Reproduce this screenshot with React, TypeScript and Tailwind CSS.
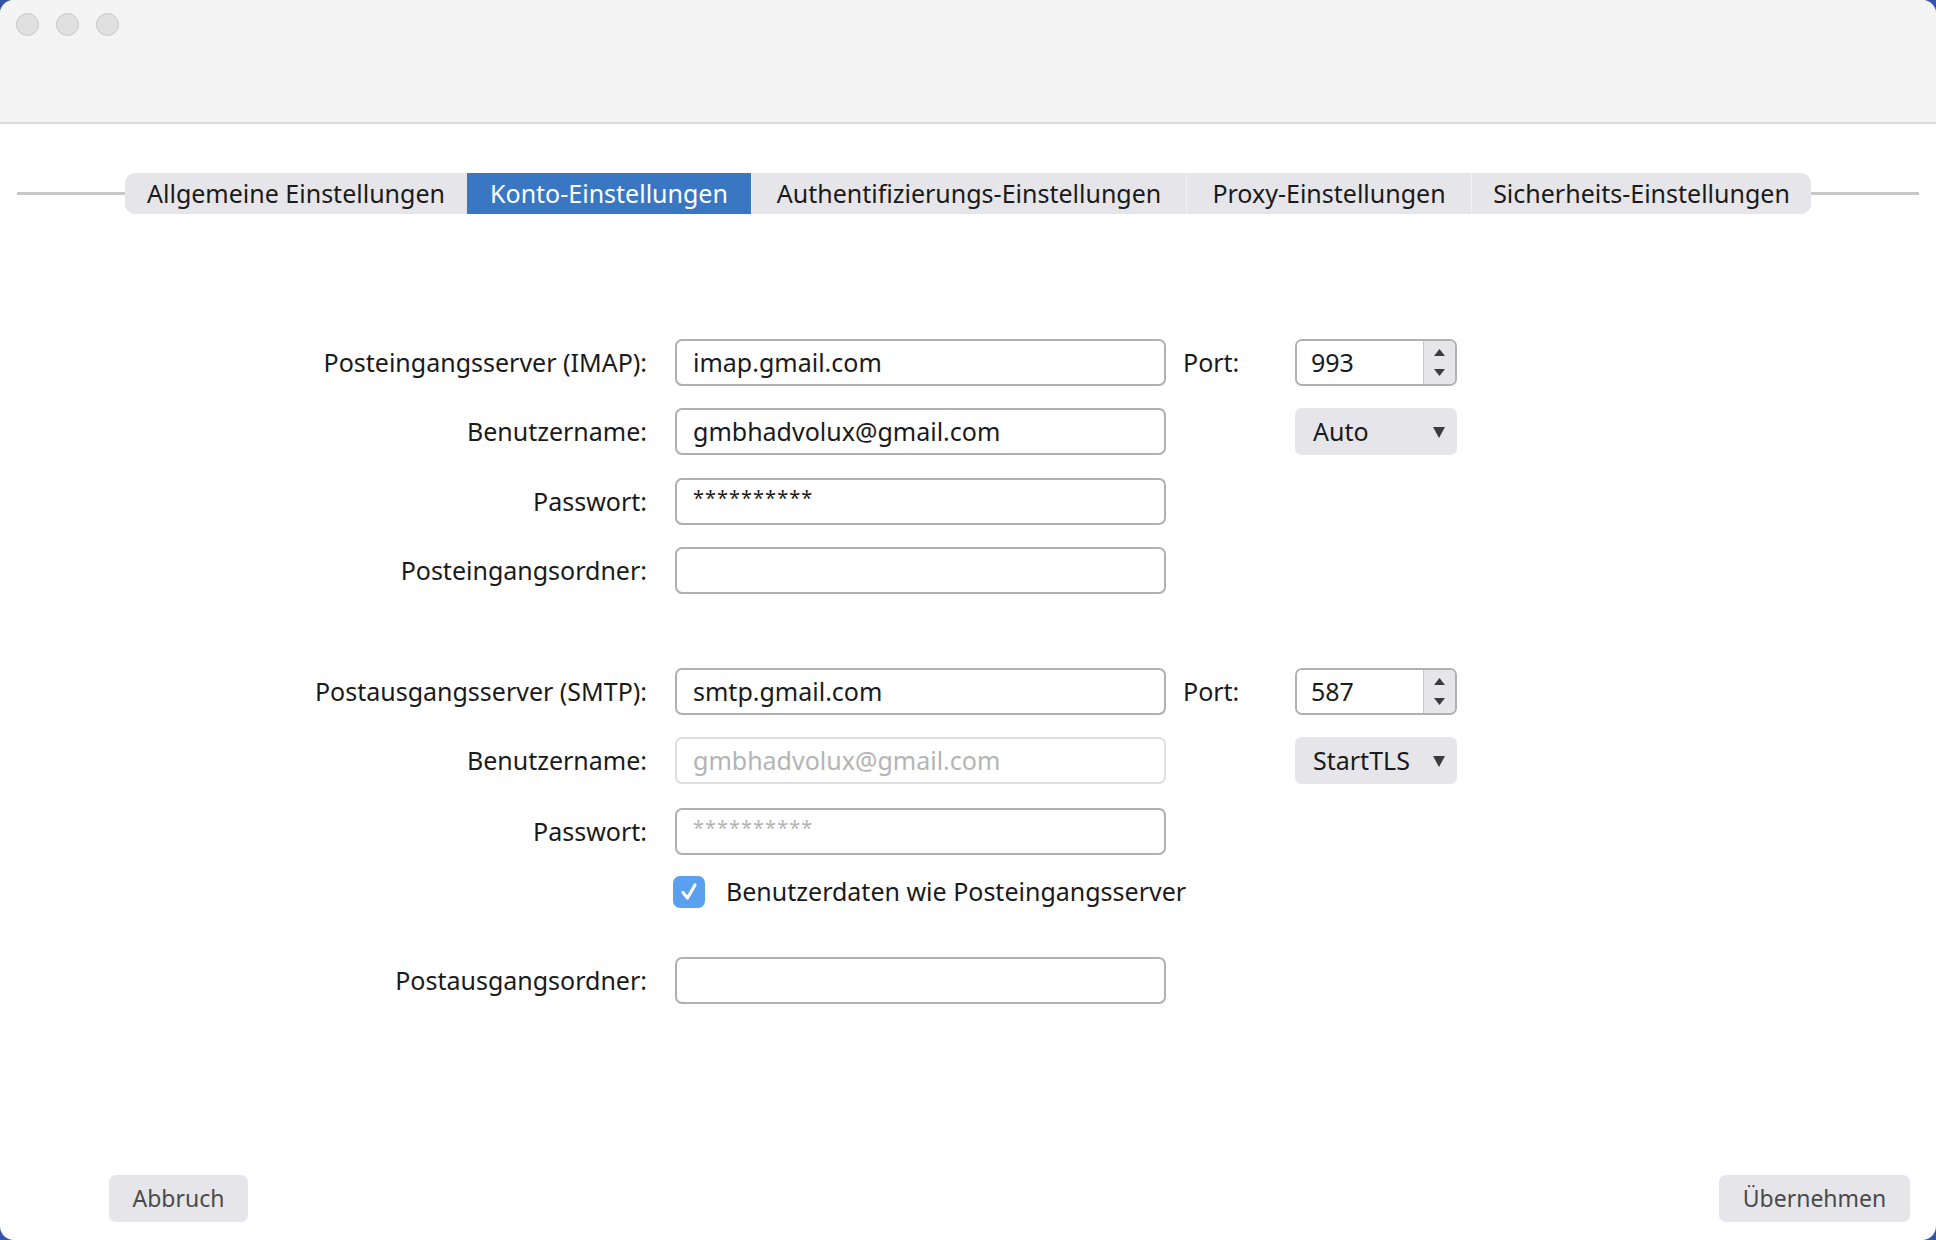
import React from 'react';

const font = "font-['Noto_Sans',sans-serif]";

const tabs = [
    { label: 'Allgemeine Einstellungen', w: 'w-[342px]' },
    { label: 'Konto-Einstellungen', w: 'w-[284px]', active: true },
    { label: 'Authentifizierungs-Einstellungen', w: 'w-[435px]' },
    { label: 'Proxy-Einstellungen', w: 'w-[285px]' },
    { label: 'Sicherheits-Einstellungen', w: 'w-[340px]' },
];

const TextField: React.FC<{ value?: string; disabled?: boolean; password?: boolean; dim?: boolean }> = ({ value = '', disabled, password, dim }) => (
    <div
        className={`ml-[28px] w-[491px] h-[47px] rounded-[7px] border-2 flex items-center px-[16px] bg-white ${
            disabled ? 'border-[#dedede] text-[#b4b4b4]' : 'border-[#b0b0b0] text-[#1a1a1a]'
        }`}
    >
        {password ? (
            <span className={`text-[20px] tracking-[1px] -mt-[8px] ${dim ? 'text-[#b4b4b4]' : 'text-[#1a1a1a]'}`}>{value}</span>
        ) : (
            <span className="text-[25px]">{value}</span>
        )}
    </div>
);

const Label: React.FC<{ children: React.ReactNode }> = ({ children }) => (
    <div className="w-[647px] text-right text-[25px] text-[#1a1a1a]">{children}</div>
);

const Spin: React.FC<{ value: string }> = ({ value }) => (
    <div className="w-[162px] h-[47px] rounded-[7px] border-2 border-[#b0b0b0] flex overflow-hidden">
        <div className="flex-1 flex items-center pl-[14px] text-[25px] text-[#1a1a1a] bg-white">{value}</div>
        <div className="w-[32px] bg-[#e6e6ea] border-l border-[#c8c8cc] flex flex-col items-center justify-center gap-[13px]">
            <svg width="11" height="7" viewBox="0 0 11 7"><path d="M5.5 0 L11 7 L0 7 Z" fill="#3c3c3c" /></svg>
            <svg width="11" height="7" viewBox="0 0 11 7"><path d="M0 0 L11 0 L5.5 7 Z" fill="#3c3c3c" /></svg>
        </div>
    </div>
);

const Select: React.FC<{ value: string }> = ({ value }) => (
    <div className="w-[162px] h-[47px] rounded-[7px] bg-[#e6e6ea] flex items-center justify-between pl-[18px] pr-[12px]">
        <span className="text-[25px] text-[#1a1a1a]">{value}</span>
        <svg width="12" height="12" viewBox="0 0 12 12"><path d="M0 1 L12 1 L6 12 Z" fill="#3c3c3c" /></svg>
    </div>
);

const App: React.FC = () => {
    return (
        <div className={`w-[1936px] h-[1240px] overflow-hidden bg-[#3556a8] ${font}`}>
            <div className="w-full h-full bg-white rounded-[14px] overflow-hidden flex flex-col">
                {/* Title bar */}
                <div className="h-[124px] shrink-0 bg-[#f4f4f4] border-b-2 border-[#d9d9d9] flex items-start gap-[17px] pl-[16px] pt-[13px]">
                    <div className="w-[23px] h-[23px] rounded-full bg-[#e0e0e0] border border-[#c6c6c6]" />
                    <div className="w-[23px] h-[23px] rounded-full bg-[#e0e0e0] border border-[#c6c6c6]" />
                    <div className="w-[23px] h-[23px] rounded-full bg-[#e0e0e0] border border-[#c6c6c6]" />
                </div>

                {/* Tabs */}
                <div className="mt-[49px] flex items-center px-[17px]">
                    <div className="flex-1 h-[3px] bg-[#c8c8c8]" />
                    <div className="flex h-[41px] rounded-[10px] bg-[#e6e6ea] overflow-hidden">
                        {tabs.map((t, i) => (
                            <div
                                key={t.label}
                                className={`${t.w} h-full flex items-center justify-center text-[25px] ${
                                    t.active ? 'bg-[#3a77c3] text-white' : 'text-[#1a1a1a]'
                                } ${i > 1 ? 'border-l border-[#f2f2f4]' : ''}`}
                            >
                                {t.label}
                            </div>
                        ))}
                    </div>
                    <div className="flex-1 h-[3px] bg-[#c8c8c8]" />
                </div>

                {/* Form */}
                <div className="mt-[125px] flex flex-col">
                    <div className="flex items-center h-[47px]">
                        <Label>Posteingangsserver (IMAP):</Label>
                        <TextField value="imap.gmail.com" />
                        <div className="ml-[17px] w-[112px] text-[25px] text-[#1a1a1a]">Port:</div>
                        <Spin value="993" />
                    </div>
                    <div className="flex items-center h-[47px] mt-[22px]">
                        <Label>Benutzername:</Label>
                        <TextField value="gmbhadvolux@gmail.com" />
                        <div className="ml-[129px]">
                            <Select value="Auto" />
                        </div>
                    </div>
                    <div className="flex items-center h-[47px] mt-[23px]">
                        <Label>Passwort:</Label>
                        <TextField value="**********" password />
                    </div>
                    <div className="flex items-center h-[47px] mt-[22px]">
                        <Label>Posteingangsordner:</Label>
                        <TextField />
                    </div>

                    <div className="flex items-center h-[47px] mt-[74px]">
                        <Label>Postausgangsserver (SMTP):</Label>
                        <TextField value="smtp.gmail.com" />
                        <div className="ml-[17px] w-[112px] text-[25px] text-[#1a1a1a]">Port:</div>
                        <Spin value="587" />
                    </div>
                    <div className="flex items-center h-[47px] mt-[22px]">
                        <Label>Benutzername:</Label>
                        <TextField value="gmbhadvolux@gmail.com" disabled />
                        <div className="ml-[129px]">
                            <Select value="StartTLS" />
                        </div>
                    </div>
                    <div className="flex items-center h-[47px] mt-[24px]">
                        <Label>Passwort:</Label>
                        <TextField value="**********" password dim />
                    </div>
                    <div className="flex items-center h-[32px] mt-[21px] pl-[673px]">
                        <div className="w-[32px] h-[32px] rounded-[7px] bg-[#5ba0ee] flex items-center justify-center">
                            <svg width="20" height="20" viewBox="0 0 20 20">
                                <path d="M4 10.5 L8.5 16 L16 3" stroke="white" strokeWidth="3.2" fill="none" strokeLinecap="round" strokeLinejoin="round" />
                            </svg>
                        </div>
                        <span className="ml-[21px] text-[25px] text-[#1a1a1a]">Benutzerdaten wie Posteingangsserver</span>
                    </div>
                    <div className="flex items-center h-[47px] mt-[49px]">
                        <Label>Postausgangsordner:</Label>
                        <TextField />
                    </div>
                </div>

                {/* Footer buttons */}
                <div className="mt-auto mb-[18px] flex justify-between pl-[109px] pr-[26px]">
                    <button className="w-[139px] h-[47px] rounded-[7px] bg-[#e6e6ea] text-[23px] text-[#4a4a4a]">Abbruch</button>
                    <button className="w-[191px] h-[47px] rounded-[7px] bg-[#e6e6ea] text-[23px] text-[#4a4a4a]">Übernehmen</button>
                </div>
            </div>
        </div>
    );
};

export default App;
